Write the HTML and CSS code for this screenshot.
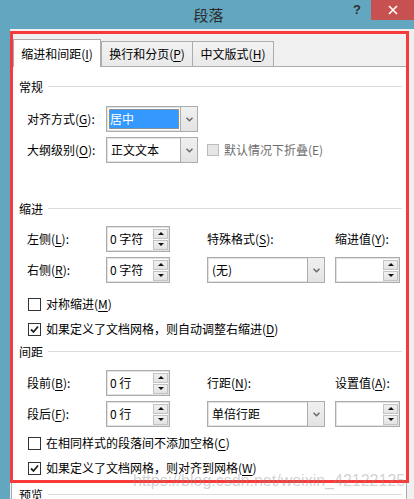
FILE: index.html
```html
<!DOCTYPE html>
<html lang="zh">
<head>
<meta charset="utf-8">
<title>段落</title>
<link rel="stylesheet" href="styles.css">
</head>
<body>
<div class="window">
  <div class="titlebar">
    <span class="title">段落</span>
    <div class="controls">
      <span class="help">?</span>
      <span class="close"><svg width="10" height="10" viewBox="0 0 10 10"><path d="M1 1L9 9M9 1L1 9" stroke="#fff" stroke-width="1.6" fill="none"/></svg></span>
    </div>
  </div>
  <div class="frame">
    <div class="client">
      <div class="tabs">
        <div class="tab active t1">缩进和间距(<u>I</u>)</div>
        <div class="tab t2">换行和分页(<u>P</u>)</div>
        <div class="tab t3">中文版式(<u>H</u>)</div>
      </div>
      <div class="panel">
        <div class="heading h-general">常规</div>
        <div class="grid g-general">
          <div class="lbl">对齐方式(<u>G</u>):</div>
          <div class="select w92"><span class="sel-text hl">居中</span><span class="dd"><svg width="7" height="5" viewBox="0 0 7 5"><path d="M0.5 0.8L3.5 3.8L6.5 0.8" stroke="#6a6a6a" stroke-width="1.5" fill="none"/></svg></span></div>
          <div></div><div></div>
          <div class="lbl">大纲级别(<u>O</u>):</div>
          <div class="select w92"><span class="sel-text">正文文本</span><span class="dd"><svg width="7" height="5" viewBox="0 0 7 5"><path d="M0.5 0.8L3.5 3.8L6.5 0.8" stroke="#6a6a6a" stroke-width="1.5" fill="none"/></svg></span></div>
          <div class="check disabled span2"><span class="box"></span><span>默认情况下折叠(E)</span></div>
        </div>

        <div class="heading h-indent">缩进</div>
        <div class="grid g-indent">
          <div class="lbl">左侧(<u>L</u>):</div>
          <div class="spin"><span class="spin-text">0 字符</span><span class="btns"><span class="sb up"></span><span class="sb down"></span></span></div>
          <div class="lbl">特殊格式(<u>S</u>):</div>
          <div class="lbl">缩进值(<u>Y</u>):</div>
          <div class="lbl">右侧(<u>R</u>):</div>
          <div class="spin"><span class="spin-text">0 字符</span><span class="btns"><span class="sb up"></span><span class="sb down"></span></span></div>
          <div class="select w118"><span class="sel-text">(无)</span><span class="dd"><svg width="7" height="5" viewBox="0 0 7 5"><path d="M0.5 0.8L3.5 3.8L6.5 0.8" stroke="#6a6a6a" stroke-width="1.5" fill="none"/></svg></span></div>
          <div class="spin w65"><span class="spin-text"></span><span class="btns"><span class="sb up"></span><span class="sb down"></span></span></div>
        </div>
        <div class="check row c1"><span class="box"></span><span>对称缩进(<u>M</u>)</span></div>
        <div class="check row c2"><span class="box checked"><svg width="11" height="11" viewBox="0 0 11 11"><path d="M2 5.5L4.5 8L9 2.5" stroke="#222" stroke-width="1.8" fill="none"/></svg></span><span>如果定义了文档网格，则自动调整右缩进(<u>D</u>)</span></div>

        <div class="heading h-space">间距</div>
        <div class="grid g-space">
          <div class="lbl">段前(<u>B</u>):</div>
          <div class="spin"><span class="spin-text">0 行</span><span class="btns"><span class="sb up"></span><span class="sb down"></span></span></div>
          <div class="lbl">行距(<u>N</u>):</div>
          <div class="lbl">设置值(<u>A</u>):</div>
          <div class="lbl">段后(<u>F</u>):</div>
          <div class="spin"><span class="spin-text">0 行</span><span class="btns"><span class="sb up"></span><span class="sb down"></span></span></div>
          <div class="select w118"><span class="sel-text">单倍行距</span><span class="dd"><svg width="7" height="5" viewBox="0 0 7 5"><path d="M0.5 0.8L3.5 3.8L6.5 0.8" stroke="#6a6a6a" stroke-width="1.5" fill="none"/></svg></span></div>
          <div class="spin w65"><span class="spin-text"></span><span class="btns"><span class="sb up"></span><span class="sb down"></span></span></div>
        </div>
        <div class="check row c3"><span class="box"></span><span>在相同样式的段落间不添加空格(<u>C</u>)</span></div>
        <div class="check row c4"><span class="box checked"><svg width="11" height="11" viewBox="0 0 11 11"><path d="M2 5.5L4.5 8L9 2.5" stroke="#222" stroke-width="1.8" fill="none"/></svg></span><span>如果定义了文档网格，则对齐到网格(<u>W</u>)</span></div>

        <div class="heading h-preview">预览</div>
      </div>
    </div>
  </div>
  <div class="highlight"></div>
  <div class="watermark">https://blog.csdn.net/weixin_42122125</div>
</div>
</body>
</html>
```

FILE: styles.css
```css
* { box-sizing: border-box; margin: 0; padding: 0; }
html, body { width: 414px; height: 499px; overflow: hidden; }
body {
  font-family: "Noto Sans CJK SC", "Microsoft YaHei", sans-serif;
  font-size: 12px;
  line-height: 16px;
  color: #000;
  background: #62a7bf;
}
u { text-decoration: underline; text-decoration-thickness: 1px; text-underline-offset: 2px; }

.window {
  position: relative;
  width: 414px;
  height: 499px;
  background: #62a7bf;
  display: flex;
  flex-direction: column;
}

/* title bar */
.titlebar {
  height: 29px;
  flex: none;
  display: grid;
  grid-template-columns: 1fr auto 1fr;
  align-items: start;
}
.title {
  grid-column: 2;
  font-size: 15px;
  line-height: 29px;
  color: #2b2b2b;
  padding-left: 3px;
}
.controls {
  grid-column: 3;
  justify-self: end;
  display: flex;
  align-items: flex-start;
}
.help {
  font-family: "Liberation Sans", sans-serif;
  font-weight: bold;
  font-size: 13px;
  line-height: 20px;
  color: #2f2f2f;
  margin-right: 10px;
}
.close {
  width: 43px;
  height: 20px;
  background: #c75050;
  display: flex;
  align-items: center;
  justify-content: center;
}

/* frame */
.frame {
  flex: 1;
  min-height: 0;
  padding-left: 10px;
  display: flex;
}
.client {
  flex: 1;
  background: #f0f0f0;
  padding-top: 10px;
  overflow: hidden;
}

/* tabs */
.tabs {
  position: relative;
  z-index: 1;
  display: flex;
  align-items: flex-end;
  height: 28px;
  margin-left: 3px;
  margin-bottom: -1px;
}
.tab {
  height: 25px;
  margin-bottom: 1px;
  border: 1px solid #acacac;
  border-bottom: none;
  background: linear-gradient(#f2f2f2, #e9e9e9);
  text-align: center;
  padding-top: 4px;
  white-space: nowrap;
}
.tab.active {
  height: 28px;
  margin-bottom: 0;
  background: #fff;
  padding-top: 6px;
}
.t1 { width: 88px; }
.t2 { width: 92px; }
.t3 { width: 82px; margin-left: -1px; }

/* panel */
.panel {
  margin-left: 1px;
  width: 396px;
  height: 600px;
  border: 1px solid #acacac;
  background: #fff;
  padding-left: 7px;
  padding-right: 4px;
}
.heading {
  display: flex;
  align-items: center;
  gap: 5px;
  height: 16px;
}
.heading::after {
  content: "";
  flex: 1;
  height: 1px;
  background: #dcdcdc;
  margin-top: -2px;
}
.h-general { margin-top: 12px; }
.h-indent { margin-top: 38px; }
.h-space { margin-top: 5px; }
.h-preview { margin-top: 9px; }

.grid {
  display: grid;
  grid-template-columns: 79px 101px 128px 65px;
  grid-auto-rows: 26px;
  row-gap: 5px;
  align-items: center;
  padding-left: 8px;
}
.g-general { margin-top: 11px; }
.g-indent { margin-top: 9px; }
.g-space { margin-top: 10px; }
.lbl { white-space: nowrap; }
.span2 { grid-column: 3 / 5; }

/* select */
.select {
  height: 26px;
  border: 1px solid #acacac;
  box-shadow: inset 0 0 0 1px #e2e2e2;
  background: #fff;
  display: flex;
  align-items: stretch;
}
.w92 { width: 92px; }
.w118 { width: 118px; }
.sel-text {
  flex: 1;
  padding-left: 4px;
  display: flex;
  align-items: center;
  white-space: nowrap;
}
.sel-text.hl {
  margin: 2px 1px 2px 2px;
  padding-left: 1px;
  background: #3399ff;
  color: #fff;
  outline: 1px dotted #d98a3c;
  outline-offset: -1px;
}
.dd {
  width: 17px;
  flex: none;
  border-left: 1px solid #acacac;
  background: linear-gradient(#f0f0f0, #e3e3e3);
  display: flex;
  align-items: center;
  justify-content: center;
}

/* spin */
.spin {
  width: 64px;
  height: 26px;
  border: 1px solid #acacac;
  box-shadow: inset 0 0 0 1px #e2e2e2;
  background: #fff;
  display: flex;
  align-items: center;
}
.spin.w65 { width: 65px; }
.spin-text {
  flex: 1;
  padding-left: 3px;
  white-space: nowrap;
}
.btns {
  width: 15px;
  margin-right: 1px;
  display: flex;
  flex-direction: column;
  gap: 1px;
}
.sb {
  height: 10px;
  border: 1px solid #c3c3c3;
  background: linear-gradient(#f0f0f0, #e3e3e3);
  display: flex;
  align-items: center;
  justify-content: center;
}
.sb::after {
  content: "";
  width: 0;
  height: 0;
  border-left: 3px solid transparent;
  border-right: 3px solid transparent;
}
.sb.up::after { border-bottom: 3px solid #111; }
.sb.down::after { border-top: 3px solid #111; }

/* checkboxes */
.check {
  display: flex;
  align-items: center;
  gap: 5px;
  white-space: nowrap;
}
.check .box {
  width: 13px;
  height: 13px;
  flex: none;
  border: 1px solid #333;
  background: #fff;
  display: flex;
  align-items: center;
  justify-content: center;
}
.check.disabled { color: #6d6d6d; }
.check.disabled .box {
  width: 12px;
  height: 12px;
  border-color: #bcbcbc;
  background: #e6e6e6;
}
.check.row {
  height: 20px;
  padding-left: 9px;
}
.c1 { margin-top: 11px; }
.c2 { margin-top: 5px; }
.c3 { margin-top: 6px; }
.c4 { margin-top: 5px; }

/* annotation overlay */
.highlight {
  position: absolute;
  left: 10px;
  top: 31px;
  width: 399px;
  height: 452px;
  border: 3px solid #f93a3a;
  pointer-events: none;
  z-index: 5;
}
.watermark {
  position: absolute;
  left: 133px;
  top: 472px;
  font-family: "Liberation Sans", Arial, sans-serif;
  font-size: 16px;
  line-height: 18px;
  color: rgba(140, 140, 140, 0.4);
  white-space: nowrap;
  z-index: 6;
}
```
